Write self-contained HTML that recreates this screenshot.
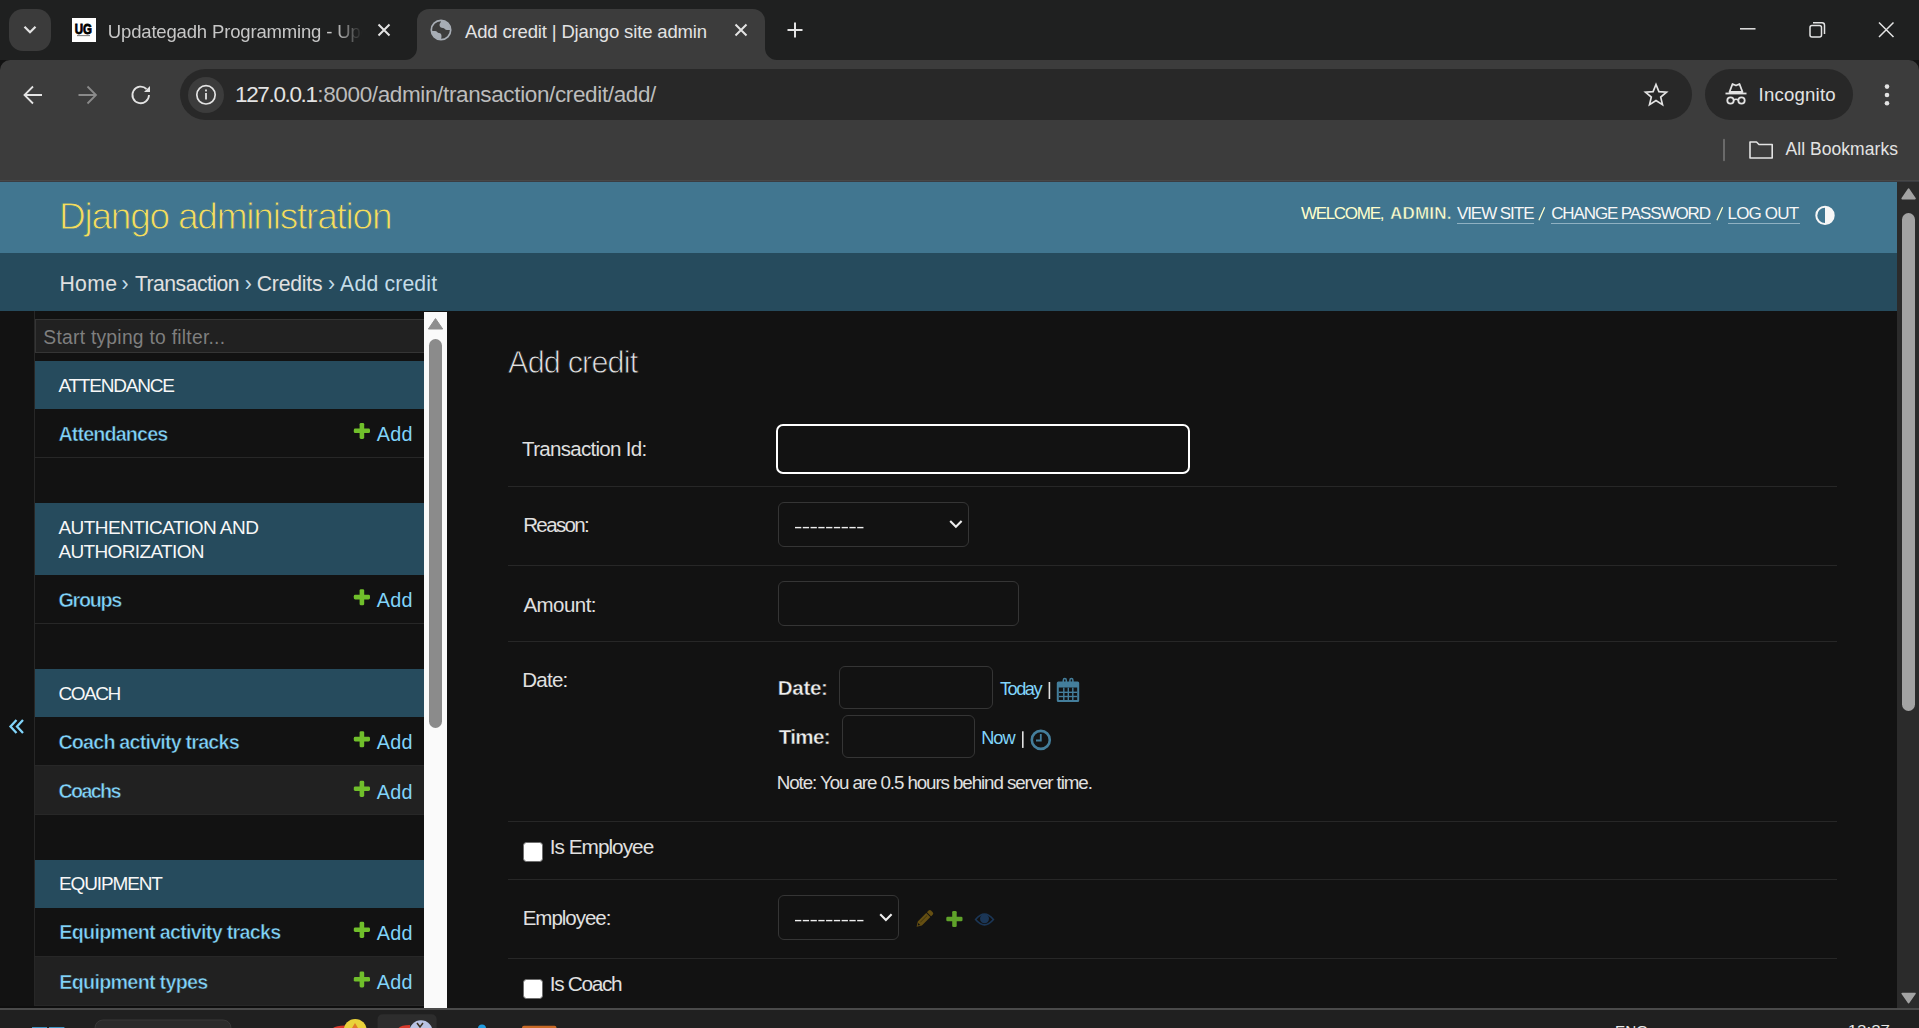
<!DOCTYPE html>
<html><head><meta charset="utf-8"><title>Add credit | Django site admin</title>
<style>
*{box-sizing:border-box}
html,body{margin:0;padding:0;width:1919px;height:1028px;overflow:hidden;background:#121212;font-family:"Liberation Sans", sans-serif}
.a{position:absolute}
svg text{font-family:"Liberation Sans",sans-serif;white-space:pre}
</style></head><body>
<!-- tab strip -->
<div class="a" style="left:0;top:0;width:1919px;height:60px;background:#1f2020"></div>
<div class="a" style="left:9px;top:9px;width:42px;height:42px;border-radius:14px;background:#3b3b3b"></div>
<!-- active tab -->
<div class="a" style="left:417px;top:9px;width:348px;height:52px;background:#3c3c3c;border-radius:12px 12px 0 0"></div>
<!-- toolbar -->
<div class="a" style="left:0;top:60px;width:1919px;height:120px;background:#3c3c3c;border-radius:10px 10px 0 0"></div>
<div class="a" style="left:0;top:180px;width:1919px;height:1px;background:#474747"></div>
<div class="a" style="left:0;top:181px;width:1919px;height:1px;background:#3b3d42"></div>
<div class="a" style="left:180px;top:69px;width:1512px;height:51px;border-radius:26px;background:#282828"></div>
<div class="a" style="left:188px;top:76.5px;width:36px;height:36px;border-radius:18px;background:#3c3c3c"></div>
<div class="a" style="left:1705px;top:69px;width:148px;height:51px;border-radius:26px;background:#282828"></div>
<!-- django header -->
<div class="a" style="left:0;top:182px;width:1897px;height:71px;background:#417690"></div>
<div class="a" style="left:0;top:253px;width:1897px;height:58px;background:#264b5d"></div>
<!-- nav toggle border -->
<div class="a" style="left:34px;top:311px;width:1px;height:697px;background:#272727"></div>
<!-- filter -->
<div class="a" style="left:35px;top:319px;width:395px;height:34px;background:#212121;border:1px solid #353535"></div>
<!-- sidebar modules -->
<div class="a" style="left:35px;top:361px;width:389px;height:48px;background:#264b5d"></div>
<div class="a" style="left:35px;top:457px;width:389px;height:1px;background:#272727"></div>
<div class="a" style="left:35px;top:503px;width:389px;height:72px;background:#264b5d"></div>
<div class="a" style="left:35px;top:623px;width:389px;height:1px;background:#272727"></div>
<div class="a" style="left:35px;top:669px;width:389px;height:48px;background:#264b5d"></div>
<div class="a" style="left:35px;top:765px;width:389px;height:1px;background:#272727"></div>
<div class="a" style="left:35px;top:766px;width:389px;height:48px;background:#212121"></div>
<div class="a" style="left:35px;top:814px;width:389px;height:1px;background:#272727"></div>
<div class="a" style="left:35px;top:860px;width:389px;height:48px;background:#264b5d"></div>
<div class="a" style="left:35px;top:956px;width:389px;height:1px;background:#272727"></div>
<div class="a" style="left:35px;top:957px;width:389px;height:48px;background:#212121"></div>
<div class="a" style="left:35px;top:1005px;width:389px;height:1px;background:#272727"></div>
<div class="a" style="left:0;top:1006px;width:424px;height:2px;background:#0e0e0e"></div>
<!-- sidebar scrollbar -->
<div class="a" style="left:424px;top:312px;width:23px;height:696px;background:#fafafa"></div>
<div class="a" style="left:429px;top:339px;width:13px;height:389px;border-radius:6.5px;background:#8b8b8b"></div>
<!-- form -->
<div class="a" style="left:776px;top:423.5px;width:414px;height:50px;border:2.5px solid #ffffff;border-radius:7px;background:#121212"></div>
<div class="a" style="left:508px;top:486px;width:1329px;height:1px;background:#272727"></div>
<div class="a" style="left:778px;top:502px;width:191px;height:45px;border:1.5px solid #353535;border-radius:6px;background:#121212"></div>
<div class="a" style="left:508px;top:565px;width:1329px;height:1px;background:#272727"></div>
<div class="a" style="left:778px;top:581px;width:241px;height:45px;border:1.5px solid #353535;border-radius:6px;background:#121212"></div>
<div class="a" style="left:508px;top:641px;width:1329px;height:1px;background:#272727"></div>
<div class="a" style="left:839px;top:666px;width:154px;height:43px;border:1.5px solid #353535;border-radius:6px;background:#121212"></div>
<div class="a" style="left:842px;top:715px;width:133px;height:43px;border:1.5px solid #353535;border-radius:6px;background:#121212"></div>
<div class="a" style="left:508px;top:821px;width:1329px;height:1px;background:#272727"></div>
<div class="a" style="left:523px;top:842px;width:19.5px;height:19.5px;border:1.5px solid #6e6e6e;border-radius:3.5px;background:#ffffff"></div>
<div class="a" style="left:508px;top:879px;width:1329px;height:1px;background:#272727"></div>
<div class="a" style="left:778px;top:895px;width:121px;height:45px;border:1.5px solid #353535;border-radius:6px;background:#121212"></div>
<div class="a" style="left:508px;top:958px;width:1329px;height:1px;background:#272727"></div>
<div class="a" style="left:523px;top:979px;width:19.5px;height:19.5px;border:1.5px solid #6e6e6e;border-radius:3.5px;background:#ffffff"></div>
<!-- page scrollbar -->
<div class="a" style="left:1897px;top:182px;width:22px;height:826px;background:#2b2b2b"></div>
<div class="a" style="left:1902px;top:213px;width:13px;height:498px;border-radius:6.5px;background:#a3a3a3"></div>
<!-- taskbar -->
<div class="a" style="left:0;top:1008px;width:1919px;height:1.5px;background:#4a4a4a"></div>
<div class="a" style="left:0;top:1009.5px;width:1919px;height:18.5px;background:#202020"></div>

<svg class="a" style="left:0;top:0" width="1919" height="1028" viewBox="0 0 1919 1028">
<defs>
<linearGradient id="fade" x1="0" x2="1" y1="0" y2="0"><stop offset="0" stop-color="#fff"/><stop offset="1" stop-color="#fff" stop-opacity="0"/></linearGradient>
<mask id="m1" maskUnits="userSpaceOnUse" x="100" y="10" width="270" height="40"><rect x="100" y="10" width="236" height="40" fill="#fff"/><rect x="336" y="10" width="26" height="40" fill="url(#fade)"/></mask>
</defs>
<!-- active tab inverted corners -->
<path d="M405 60 A12 12 0 0 0 417 48 L417 60 Z" fill="#3c3c3c"/>
<path d="M777 60 A12 12 0 0 1 765 48 L765 60 Z" fill="#3c3c3c"/>
<!-- chevron in tab search -->
<path d="M24.5 26.8 L30 32.3 L35.5 26.8" stroke="#e3e3e3" stroke-width="2.2" fill="none"/>
<!-- favicon UG -->
<rect x="72" y="18" width="24" height="24" fill="#fff"/>
<text x="74.8" y="33.6" font-size="15.5" font-weight="700" fill="#000" stroke="#000" stroke-width="0.9" textLength="17.2" lengthAdjust="spacingAndGlyphs">UG</text><rect x="77" y="35.3" width="13" height="0.8" fill="#555"/>
<!-- tab close X -->
<path d="M378.5 24.5 L389.5 35.5 M389.5 24.5 L378.5 35.5" stroke="#e3e3e3" stroke-width="2" />
<path d="M735.5 24.5 L746.5 35.5 M746.5 24.5 L735.5 35.5" stroke="#e3e3e3" stroke-width="2" />
<!-- globe -->
<circle cx="441" cy="30" r="9.7" fill="none" stroke="#a7adb5" stroke-width="1.7"/>
<path d="M441 20.5 A9.5 9.5 0 0 1 450.5 30 L447 30 C445 30 444.5 28 443 28 C441 28 439.5 27 439.5 25 C439.5 23 441 23 441 20.5 Z" fill="#a7adb5"/>
<path d="M431.5 31 L435 31 C437 31 437.5 33 439 33 C440.5 33 441.5 34 441.5 36 C441.5 38 441 39 441 39.5 A9.5 9.5 0 0 1 431.5 31 Z" fill="#a7adb5"/>
<!-- new tab plus -->
<path d="M795 22.5 V37.5 M787.5 30 H802.5" stroke="#e3e3e3" stroke-width="2"/>
<!-- window controls -->
<path d="M1740 28.8 H1755.5" stroke="#e3e3e3" stroke-width="1.5"/>
<rect x="1810" y="25.5" width="11.5" height="11.5" rx="2" fill="none" stroke="#e3e3e3" stroke-width="1.5"/>
<path d="M1813 22.7 H1822 Q1824.5 22.7 1824.5 25.2 V34" fill="none" stroke="#e3e3e3" stroke-width="1.5"/>
<path d="M1879 22.5 L1893.5 37 M1893.5 22.5 L1879 37" stroke="#e3e3e3" stroke-width="1.5"/>
<!-- back / forward / reload -->
<path d="M42 95 H24.5 M33 86.5 L24.5 95 L33 103.5" fill="none" stroke="#e3e3e3" stroke-width="1.8"/>
<path d="M78.5 95 H96 M87.5 86.5 L96 95 L87.5 103.5" fill="none" stroke="#8a8a8a" stroke-width="1.8"/>
<path d="M149 95 A8.3 8.3 0 1 1 146.5 89" fill="none" stroke="#e3e3e3" stroke-width="1.8"/>
<path d="M150 86 V92 H144 Z" fill="#e3e3e3"/>
<!-- info icon -->
<circle cx="206" cy="94.8" r="9.2" fill="none" stroke="#e3e3e3" stroke-width="1.7"/>
<rect x="205.1" y="93" width="1.8" height="6.5" fill="#e3e3e3"/>
<rect x="205.1" y="89.5" width="1.8" height="1.9" fill="#e3e3e3"/>
<!-- star -->
<path d="M1656 84.5 L1658.9 91.6 L1666.5 92.2 L1660.7 97.1 L1662.5 104.6 L1656 100.6 L1649.5 104.6 L1651.3 97.1 L1645.5 92.2 L1653.1 91.6 Z" fill="none" stroke="#e3e3e3" stroke-width="1.7" stroke-linejoin="miter"/>
<!-- incognito icon -->
<path d="M1729.5 92 L1732.5 84 Q1736 85.5 1736 85.5 Q1739.5 84 1739.5 84 L1742.5 92 Z" fill="none" stroke="#e3e3e3" stroke-width="1.8" stroke-linejoin="round"/>
<path d="M1725.5 93.5 H1746.5" stroke="#e3e3e3" stroke-width="1.8"/>
<circle cx="1730.5" cy="100.5" r="3.2" fill="none" stroke="#e3e3e3" stroke-width="1.8"/>
<circle cx="1741.5" cy="100.5" r="3.2" fill="none" stroke="#e3e3e3" stroke-width="1.8"/>
<path d="M1733.7 100 Q1736 98.5 1738.3 100" fill="none" stroke="#e3e3e3" stroke-width="1.6"/>
<!-- kebab -->
<circle cx="1887" cy="86.6" r="2.3" fill="#e3e3e3"/><circle cx="1887" cy="95" r="2.3" fill="#e3e3e3"/><circle cx="1887" cy="103.3" r="2.3" fill="#e3e3e3"/>
<!-- bookmarks separator + folder -->
<rect x="1723" y="138.7" width="2" height="22.6" rx="1" fill="#6a6a6a"/>
<path d="M1750 142 H1756.5 L1759 144.5 H1772.2 V158 H1750 Z" fill="none" stroke="#e3e3e3" stroke-width="1.6" stroke-linejoin="round"/>
<!-- theme toggle -->
<circle cx="1825" cy="215.4" r="8.7" fill="none" stroke="#f7f7f7" stroke-width="2"/>
<path d="M1825 206.7 A8.7 8.7 0 0 1 1825 224.1 Z" fill="#f7f7f7"/>
<path d="M1544.6 207.3 L1538.9 220.3 M1722.6 207.3 L1716.9 220.3" stroke="#ffffcc" stroke-width="1.3"/>
<!-- underlines in header -->
<rect x="1457" y="223" width="77" height="1" fill="#8fb1c2"/>
<rect x="1551" y="223" width="160" height="1" fill="#8fb1c2"/>
<rect x="1728" y="223" width="72" height="1" fill="#8fb1c2"/>
<!-- nav toggle « -->
<path d="M16.5 720 L10.5 726.5 L16.5 733 M23 720 L17 726.5 L23 733" fill="none" stroke="#81d4fa" stroke-width="2.3"/>
<!-- sidebar scrollbar up arrow -->
<path d="M435.5 318.6 L442.7 329 H428.4 Z" fill="#8f8f8f" stroke="#8f8f8f" stroke-width="1" stroke-linejoin="round"/>
<!-- page scrollbar arrows -->
<path d="M1908.6 189.3 L1914.9 198.6 H1902.3 Z" fill="#a3a3a3" stroke="#a3a3a3" stroke-width="1.8" stroke-linejoin="round"/>
<path d="M1908.6 1002.5 L1914.9 993.6 H1902.3 Z" fill="#a3a3a3" stroke="#a3a3a3" stroke-width="1.8" stroke-linejoin="round"/>
<!-- green plus icons in sidebar -->
<g fill="#70bf2b"><rect x="359.6" y="422.9" width="4.6" height="16.1" rx="1.4"/><rect x="353.8" y="428.5" width="16.2" height="4.6" rx="1.4"/><rect x="359.6" y="589.2" width="4.6" height="16.1" rx="1.4"/><rect x="353.8" y="594.8" width="16.2" height="4.6" rx="1.4"/><rect x="359.6" y="731.2" width="4.6" height="16.1" rx="1.4"/><rect x="353.8" y="736.8" width="16.2" height="4.6" rx="1.4"/><rect x="359.6" y="780.8" width="4.6" height="16.1" rx="1.4"/><rect x="353.8" y="786.4" width="16.2" height="4.6" rx="1.4"/><rect x="359.6" y="921.8" width="4.6" height="16.1" rx="1.4"/><rect x="353.8" y="927.4" width="16.2" height="4.6" rx="1.4"/><rect x="359.6" y="971.4" width="4.6" height="16.1" rx="1.4"/><rect x="353.8" y="977.0" width="16.2" height="4.6" rx="1.4"/></g>
<!-- dashes -->
<rect x="795.00" y="526.9" width="6.3" height="1.4" fill="#eeeeee"/><rect x="795.00" y="919.9" width="6.3" height="1.4" fill="#eeeeee"/><rect x="802.77" y="526.9" width="6.3" height="1.4" fill="#eeeeee"/><rect x="802.77" y="919.9" width="6.3" height="1.4" fill="#eeeeee"/><rect x="810.54" y="526.9" width="6.3" height="1.4" fill="#eeeeee"/><rect x="810.54" y="919.9" width="6.3" height="1.4" fill="#eeeeee"/><rect x="818.31" y="526.9" width="6.3" height="1.4" fill="#eeeeee"/><rect x="818.31" y="919.9" width="6.3" height="1.4" fill="#eeeeee"/><rect x="826.08" y="526.9" width="6.3" height="1.4" fill="#eeeeee"/><rect x="826.08" y="919.9" width="6.3" height="1.4" fill="#eeeeee"/><rect x="833.85" y="526.9" width="6.3" height="1.4" fill="#eeeeee"/><rect x="833.85" y="919.9" width="6.3" height="1.4" fill="#eeeeee"/><rect x="841.62" y="526.9" width="6.3" height="1.4" fill="#eeeeee"/><rect x="841.62" y="919.9" width="6.3" height="1.4" fill="#eeeeee"/><rect x="849.39" y="526.9" width="6.3" height="1.4" fill="#eeeeee"/><rect x="849.39" y="919.9" width="6.3" height="1.4" fill="#eeeeee"/><rect x="857.16" y="526.9" width="6.3" height="1.4" fill="#eeeeee"/><rect x="857.16" y="919.9" width="6.3" height="1.4" fill="#eeeeee"/>
<!-- select chevrons -->
<path d="M950.2 521 L955.9 526.8 L961.6 521" fill="none" stroke="#eeeeee" stroke-width="2.1"/>
<path d="M880.2 914.2 L885.9 920 L891.6 914.2" fill="none" stroke="#eeeeee" stroke-width="2.1"/>
<rect x="1048.6" y="682" width="1.6" height="17" fill="#e0e0e0"/><rect x="1022" y="731.3" width="1.6" height="16.6" fill="#e0e0e0"/>
<!-- calendar icon -->
<g fill="#447e9b">
<path fill-rule="evenodd" d="M1058.3 681.6 H1077.7 Q1079.2 681.6 1079.2 683.1 V700.6 Q1079.2 702.1 1077.7 702.1 H1058.3 Q1056.8 702.1 1056.8 700.6 V683.1 Q1056.8 681.6 1058.3 681.6 Z M1058.8 687.6 V700.1 H1077.2 V687.6 Z"/>
<rect x="1063.1" y="687.6" width="1.4" height="12.5"/><rect x="1067.6" y="687.6" width="1.4" height="12.5"/><rect x="1072.1" y="687.6" width="1.4" height="12.5"/>
<rect x="1058.8" y="691.6" width="18.4" height="1.4"/><rect x="1058.8" y="695.8" width="18.4" height="1.4"/>
</g>
<path d="M1063.3 683.5 V680.2 Q1063.3 678.6 1064.8 678.6 Q1066.3 678.6 1066.3 680.2 V683.5 M1069.9 683.5 V680.2 Q1069.9 678.6 1071.4 678.6 Q1072.9 678.6 1072.9 680.2 V683.5" fill="none" stroke="#447e9b" stroke-width="1.5"/>
<!-- clock icon -->
<circle cx="1040.8" cy="739.9" r="9" fill="none" stroke="#447e9b" stroke-width="2.6"/>
<path d="M1040.8 734 V740.5 H1036" fill="none" stroke="#447e9b" stroke-width="1.8"/>
<!-- pencil (dim) -->
<g transform="rotate(-45 923.8 919.5)" fill="#654f12">
<path d="M913.6 919.5 L918.2 916.6 H933.5 Q935.2 916.6 935.2 918.3 V920.7 Q935.2 922.4 933.5 922.4 H918.2 Z"/>
<rect x="930.2" y="916" width="0.9" height="7" fill="#121212"/>
<rect x="919.5" y="918.7" width="9.5" height="0.6" fill="#3e320c"/>
<path d="M915.2 919.5 L917.4 918.1 L917.4 920.9 Z" fill="#121212"/>
</g>
<!-- plus green -->
<rect x="952.2" y="910.9" width="4.5" height="16.2" rx="1.3" fill="#5fa22a"/><rect x="946.3" y="916.8" width="16.2" height="4.5" rx="1.3" fill="#5fa22a"/>
<!-- eye (dim) -->
<path d="M975.6 919.5 Q984.5 908.8 993.4 919.5 Q984.5 930.2 975.6 919.5 Z" fill="none" stroke="#1b3656" stroke-width="1.6"/>
<circle cx="984.5" cy="918.8" r="4.5" fill="#1b3656"/>
<!-- taskbar bits -->
<rect x="32" y="1027" width="15" height="2" fill="#3f95c4"/><rect x="49" y="1027" width="15.4" height="2" fill="#3f95c4"/>
<rect x="95" y="1020" width="136" height="16" rx="8" fill="#2b2b2b" stroke="#383838" stroke-width="1"/>
<path d="M333 1028 Q336 1025.5 345 1025.5 L345 1028 Z" fill="#d8392b"/>
<circle cx="355.2" cy="1030.5" r="11.5" fill="#e9d23a"/>
<path d="M355 1023 L358 1028 L352 1028 Z" fill="#e07a2a"/>
<rect x="377.6" y="1014.2" width="59" height="20" rx="5" fill="#2d2d2d"/>
<path d="M398.6 1028 Q401 1025 410 1025 L410 1028 Z" fill="#d8392b"/>
<circle cx="421" cy="1032" r="11.7" fill="#b9c3e3"/>
<path d="M417 1023 L420 1027 L423 1023" stroke="#3a3020" stroke-width="1.5" fill="none"/>
<circle cx="482" cy="1028.5" r="4" fill="#1e9be0"/>
<rect x="522" y="1025.7" width="34.5" height="6" rx="2" fill="#c96a26"/>
<text x="1615" y="1036" font-size="14" fill="#e8e8e8" textLength="33" lengthAdjust="spacingAndGlyphs">ENG</text>
<text x="1847.7" y="1035" font-size="14" fill="#e8e8e8" textLength="42.3" lengthAdjust="spacingAndGlyphs">12:27</text>
<!-- texts -->
<g mask="url(#m1)"><text x='107.80' y='38' font-size='18.5' fill='#c7c7c7' textLength='328.75' lengthAdjust='spacing'>Updategadh Programming - Updategadh</text></g>

<text x='465.00' y='38' font-size='18.5' fill='#e3e3e3' textLength='242.07' lengthAdjust='spacing'>Add credit | Django site admin</text>
<text x='235.00' y='102' font-size='22.5' fill='#e3e3e3' textLength='83.04' lengthAdjust='spacing'>127.0.0.1</text>
<text x='317.30' y='102' font-size='22.5' fill='#bcbcbc' textLength='339.07' lengthAdjust='spacing'>:8000/admin/transaction/credit/add/</text>
<text x='1758.60' y='101.3' font-size='18.6' fill='#e3e3e3' textLength='77.07' lengthAdjust='spacing'>Incognito</text>
<text x='1785.50' y='155.4' font-size='17.5' fill='#e3e3e3' textLength='112.44' lengthAdjust='spacing'>All Bookmarks</text>
<text x='58.90' y='229.4' font-size='37' fill='#f5dd5d' textLength='333.66' lengthAdjust='spacing' stroke='#417690' stroke-width='0.9'>Django administration</text>
<text x='1300.90' y='218.9' font-size='17' fill='#ffffcc' textLength='83.56' lengthAdjust='spacing'>WELCOME,</text>
<text x='1390.00' y='218.9' font-size='17' fill='#ffffcc' font-weight='700' textLength='61.45' lengthAdjust='spacing' stroke='#417690' stroke-width='0.5'>ADMIN.</text>
<text x='1456.90' y='218.9' font-size='17' fill='#f7f7f7' textLength='77.57' lengthAdjust='spacing'>VIEW SITE</text>
<text x='1551.20' y='218.9' font-size='17' fill='#f7f7f7' textLength='159.77' lengthAdjust='spacing'>CHANGE PASSWORD</text>
<text x='1727.50' y='218.9' font-size='17' fill='#f7f7f7' textLength='71.52' lengthAdjust='spacing'>LOG OUT</text>
<text x='59.40' y='290.6' font-size='21.2' fill='#e0e0e0' textLength='57.53' lengthAdjust='spacing'>Home</text>
<text x='121.50' y='290.6' font-size='21.2' fill='#c4dce8'>›</text>
<text x='135.00' y='290.6' font-size='21.2' fill='#e0e0e0' textLength='104.52' lengthAdjust='spacing'>Transaction</text>
<text x='244.70' y='290.6' font-size='21.2' fill='#c4dce8'>›</text>
<text x='256.80' y='290.6' font-size='21.2' fill='#e0e0e0' textLength='65.72' lengthAdjust='spacing'>Credits</text>
<text x='328.00' y='290.6' font-size='21.2' fill='#c4dce8'>›</text>
<text x='340.10' y='290.6' font-size='21.2' fill='#c4dce8' textLength='97.01' lengthAdjust='spacing'>Add credit</text>
<text x='43.30' y='343.8' font-size='19.3' fill='#7f7f7f' textLength='181.77' lengthAdjust='spacing'>Start typing to filter...</text>
<text x='58.40' y='392' font-size='19' fill='#f7f7f7' textLength='116.59' lengthAdjust='spacing'>ATTENDANCE</text>
<text x='58.40' y='533.8' font-size='19' fill='#f7f7f7' textLength='200.52' lengthAdjust='spacing'>AUTHENTICATION AND</text>
<text x='58.40' y='557.7' font-size='19' fill='#f7f7f7' textLength='146.17' lengthAdjust='spacing'>AUTHORIZATION</text>
<text x='58.40' y='700.2' font-size='19' fill='#f7f7f7' textLength='62.83' lengthAdjust='spacing'>COACH</text>
<text x='59.00' y='890.3' font-size='19' fill='#f7f7f7' textLength='103.95' lengthAdjust='spacing'>EQUIPMENT</text>
<text x='58.40' y='440.7' font-size='19.8' fill='#81d4fa' font-weight='700' textLength='109.92' lengthAdjust='spacing' stroke='#121212' stroke-width='0.5'>Attendances</text>
<text x='58.40' y='607' font-size='19.8' fill='#81d4fa' font-weight='700' textLength='63.94' lengthAdjust='spacing' stroke='#121212' stroke-width='0.5'>Groups</text>
<text x='58.40' y='749' font-size='19.8' fill='#81d4fa' font-weight='700' textLength='181.32' lengthAdjust='spacing' stroke='#121212' stroke-width='0.5'>Coach activity tracks</text>
<text x='58.40' y='798' font-size='19.8' fill='#81d4fa' font-weight='700' textLength='63.07' lengthAdjust='spacing' stroke='#212121' stroke-width='0.5'>Coachs</text>
<text x='59.30' y='939.3' font-size='19.8' fill='#81d4fa' font-weight='700' textLength='222.06' lengthAdjust='spacing' stroke='#121212' stroke-width='0.5'>Equipment activity tracks</text>
<text x='59.30' y='988.9' font-size='19.8' fill='#81d4fa' font-weight='700' textLength='148.98' lengthAdjust='spacing' stroke='#212121' stroke-width='0.5'>Equipment types</text>
<text x='376.80' y='440.7' font-size='19.8' fill='#81d4fa' textLength='35.60' lengthAdjust='spacing'>Add</text>
<text x='376.80' y='607' font-size='19.8' fill='#81d4fa' textLength='35.60' lengthAdjust='spacing'>Add</text>
<text x='376.80' y='749' font-size='19.8' fill='#81d4fa' textLength='35.60' lengthAdjust='spacing'>Add</text>
<text x='376.80' y='798.6' font-size='19.8' fill='#81d4fa' textLength='35.60' lengthAdjust='spacing'>Add</text>
<text x='376.80' y='939.6' font-size='19.8' fill='#81d4fa' textLength='35.60' lengthAdjust='spacing'>Add</text>
<text x='376.80' y='989.2' font-size='19.8' fill='#81d4fa' textLength='35.60' lengthAdjust='spacing'>Add</text>
<text x='508.10' y='372.8' font-size='30.5' fill='#e0e0e0' textLength='130.13' lengthAdjust='spacing' stroke='#121212' stroke-width='0.8'>Add credit</text>
<text x='522.10' y='456.2' font-size='20.5' fill='#e0e0e0' textLength='125.04' lengthAdjust='spacing'>Transaction Id:</text>
<text x='523.20' y='532.1' font-size='20.5' fill='#e0e0e0' textLength='66.56' lengthAdjust='spacing'>Reason:</text>
<text x='523.50' y='611.7' font-size='20.5' fill='#e0e0e0' textLength='72.96' lengthAdjust='spacing'>Amount:</text>
<text x='522.30' y='686.5' font-size='20.5' fill='#e0e0e0' textLength='46.00' lengthAdjust='spacing'>Date:</text>
<text x='777.80' y='695.2' font-size='20.6' fill='#eeeeee' font-weight='700' textLength='50.10' lengthAdjust='spacing' stroke='#121212' stroke-width='0.4'>Date:</text>
<text x='778.80' y='744' font-size='20.6' fill='#eeeeee' font-weight='700' textLength='51.76' lengthAdjust='spacing' stroke='#121212' stroke-width='0.4'>Time:</text>
<text x='1000.00' y='695.2' font-size='18.2' fill='#81d4fa' textLength='42.53' lengthAdjust='spacing'>Today</text>
<text x='981.20' y='744' font-size='18.2' fill='#81d4fa' textLength='34.39' lengthAdjust='spacing'>Now</text>
<text x='776.80' y='789.1' font-size='18.75' fill='#e0e0e0' textLength='316.09' lengthAdjust='spacing'>Note: You are 0.5 hours behind server time.</text>
<text x='549.80' y='854' font-size='20.8' fill='#e0e0e0' textLength='104.44' lengthAdjust='spacing'>Is Employee</text>
<text x='522.70' y='925' font-size='20.5' fill='#e0e0e0' textLength='88.66' lengthAdjust='spacing'>Employee:</text>
<text x='549.80' y='991' font-size='20.8' fill='#e0e0e0' textLength='72.88' lengthAdjust='spacing'>Is Coach</text>
</svg>
</body></html>
